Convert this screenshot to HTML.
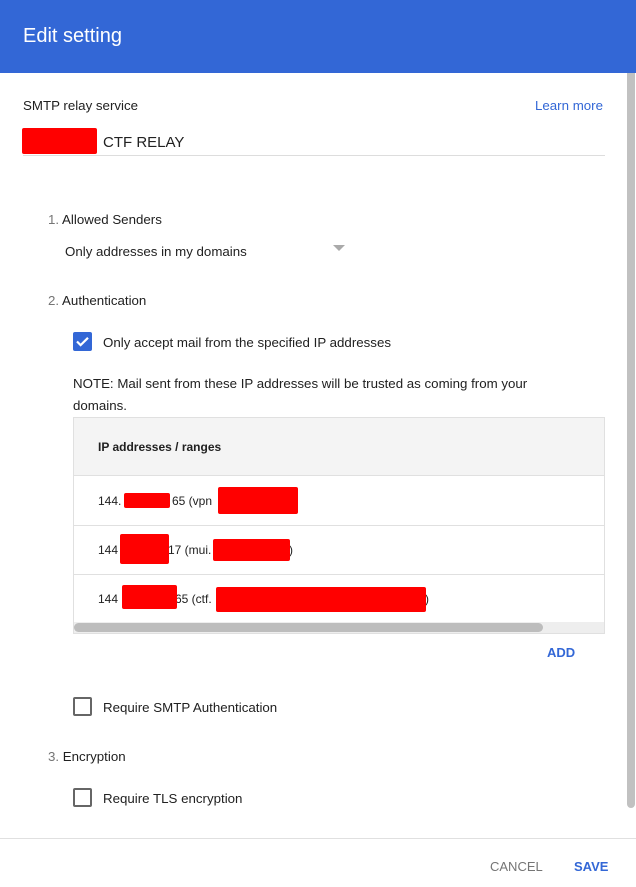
<!DOCTYPE html>
<html><head><meta charset="utf-8"><style>
*{margin:0;padding:0;box-sizing:border-box}
body{width:636px;height:887px;position:relative;background:#fff;font-family:"Liberation Sans",Arial,sans-serif;color:#212121;overflow:hidden;font-size:13.3px}
.a{position:absolute;white-space:nowrap}
.t{position:absolute;white-space:nowrap;font-size:12px}
.r{position:absolute;background:#f00;border-radius:2px}
.cb{position:absolute;width:19px;height:19px;border:2px solid #666;border-radius:2px}
.n{color:#757575}
</style></head><body>
<div class="a" style="left:0;top:0;width:636px;height:73px;background:#3367d6"></div>
<div class="a" style="left:23px;top:25px;font-size:20px;color:#fff">Edit setting</div>
<div class="a" style="left:627px;top:73px;width:8px;height:735px;background:#c1c1c1;border-radius:0 0 4px 4px"></div>

<div class="a" style="left:23px;top:98px">SMTP relay service</div>
<div class="a" style="left:535px;top:98px;color:#3367d6">Learn more</div>
<div class="r" style="left:22px;top:128px;width:75px;height:26px"></div>
<div class="a" style="left:103px;top:134px;font-size:15px">CTF RELAY</div>
<div class="a" style="left:23px;top:155px;width:582px;height:1px;background:#ddd"></div>

<div class="a" style="left:48px;top:212px"><span class="n">1.</span> Allowed Senders</div>
<div class="a" style="left:65px;top:244px">Only addresses in my domains</div>
<div class="a" style="left:333px;top:245px;width:0;height:0;border-left:6px solid transparent;border-right:6px solid transparent;border-top:6px solid #aaa"></div>

<div class="a" style="left:48px;top:293px"><span class="n">2.</span> Authentication</div>
<div class="a" style="left:73px;top:332px;width:19px;height:19px;background:#3367d6;border-radius:2px">
<svg width="19" height="19" viewBox="0 0 19 19"><path d="M4 9.5l3.6 3.6L15 5.8" stroke="#fff" stroke-width="2.2" fill="none"/></svg></div>
<div class="a" style="left:103px;top:335px">Only accept mail from the specified IP addresses</div>
<div class="a" style="left:73px;top:373px;line-height:22px;white-space:normal;width:500px">NOTE: Mail sent from these IP addresses will be trusted as coming from your domains.</div>

<div class="a" style="left:73px;top:417px;width:532px;height:217px;border:1px solid #e0e0e0"></div>
<div class="a" style="left:74px;top:418px;width:530px;height:58px;background:#f4f4f4;border-bottom:1px solid #e0e0e0"></div>
<div class="a" style="left:98px;top:440px;font-size:12px;font-weight:bold">IP addresses / ranges</div>
<div class="a" style="left:74px;top:525px;width:530px;height:1px;background:#e0e0e0"></div>
<div class="a" style="left:74px;top:574px;width:530px;height:1px;background:#e0e0e0"></div>

<div class="t" style="left:98px;top:494px">144.</div>
<div class="t" style="left:172px;top:494px">65 (vpn</div>
<div class="r" style="left:124px;top:493px;width:46px;height:15px"></div>
<div class="r" style="left:218px;top:487px;width:80px;height:27px"></div>

<div class="t" style="left:98px;top:543px">144</div>
<div class="t" style="left:168px;top:543px">17 (mui.</div>
<div class="t" style="left:289px;top:543px">)</div>
<div class="r" style="left:120px;top:534px;width:49px;height:30px"></div>
<div class="r" style="left:213px;top:539px;width:77px;height:22px"></div>

<div class="t" style="left:98px;top:592px">144</div>
<div class="t" style="left:175px;top:592px">65 (ctf.</div>
<div class="t" style="left:425px;top:592px">)</div>
<div class="r" style="left:122px;top:585px;width:55px;height:24px"></div>
<div class="r" style="left:216px;top:587px;width:210px;height:25px"></div>

<div class="a" style="left:74px;top:622px;width:530px;height:11px;background:#eee"></div>
<div class="a" style="left:74px;top:623px;width:469px;height:9px;background:#bdbdbd;border-radius:5px"></div>
<div class="a" style="left:547px;top:645px;color:#3367d6;font-weight:bold;font-size:13px">ADD</div>

<div class="cb" style="left:73px;top:697px"></div>
<div class="a" style="left:103px;top:700px">Require SMTP Authentication</div>
<div class="a" style="left:48px;top:749px"><span class="n">3.</span> Encryption</div>
<div class="cb" style="left:73px;top:788px"></div>
<div class="a" style="left:103px;top:791px">Require TLS encryption</div>

<div class="a" style="left:0;top:838px;width:636px;height:1px;background:#e0e0e0"></div>
<div class="a" style="left:490px;top:859px;color:#757575;font-size:13px">CANCEL</div>
<div class="a" style="left:574px;top:859px;color:#3367d6;font-size:13px;font-weight:bold">SAVE</div>
</body></html>
